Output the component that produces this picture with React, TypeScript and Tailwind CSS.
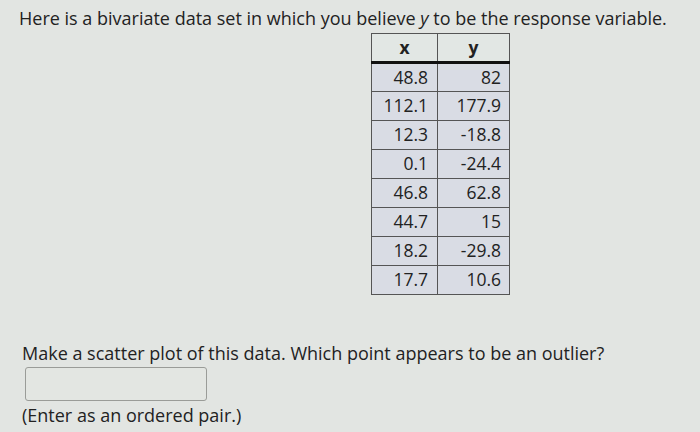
const rows: [string, string][] = [
  ["48.8", "82"],
  ["112.1", "177.9"],
  ["12.3", "-18.8"],
  ["0.1", "-24.4"],
  ["46.8", "62.8"],
  ["44.7", "15"],
  ["18.2", "-29.8"],
  ["17.7", "10.6"],
];

export default function App() {
  return (
    <div
      className="w-[700px] h-[432px] overflow-hidden bg-[#e2e5e2] text-[#222]"
      style={{ fontFamily: '"Open Sans", sans-serif' }}
    >
      <p className="pl-[19px] pt-[5px] text-[18px] leading-[26px]">
        Here is a bivariate data set in which you believe <i>y</i> to be the response variable.
      </p>

      <table className="ml-[371px] mt-[2px] border-collapse border border-[#555] text-[17.5px] leading-none">
        <thead>
          <tr className="bg-[#e2e7e4]">
            <th className="w-[66px] h-[29px] border border-[#555] border-b-[3px] border-b-[#111] font-bold text-center">
              x
            </th>
            <th className="w-[72px] h-[29px] border border-[#555] border-b-[3px] border-b-[#111] font-bold text-center">
              y
            </th>
          </tr>
        </thead>
        <tbody>
          {rows.map(([x, y]) => (
            <tr key={x} className="bg-[#d9dce4]">
              <td className="h-[29px] border border-[#555] text-right pr-[9px]">{x}</td>
              <td className="h-[29px] border border-[#555] text-right pr-[8px]">{y}</td>
            </tr>
          ))}
        </tbody>
      </table>

      <div className="pl-[22px] pt-[46px]">
        <p className="text-[18px] leading-[24px]">
          Make a scatter plot of this data. Which point appears to be an outlier?
        </p>
        <div className="mt-[2px] ml-[3px] w-[182px] h-[34px] rounded-[3px] border border-[#9a9c98] bg-[#e3e6e2]" />
        <p className="mt-[2px] text-[18px] leading-[24px]">(Enter as an ordered pair.)</p>
      </div>
    </div>
  );
}
